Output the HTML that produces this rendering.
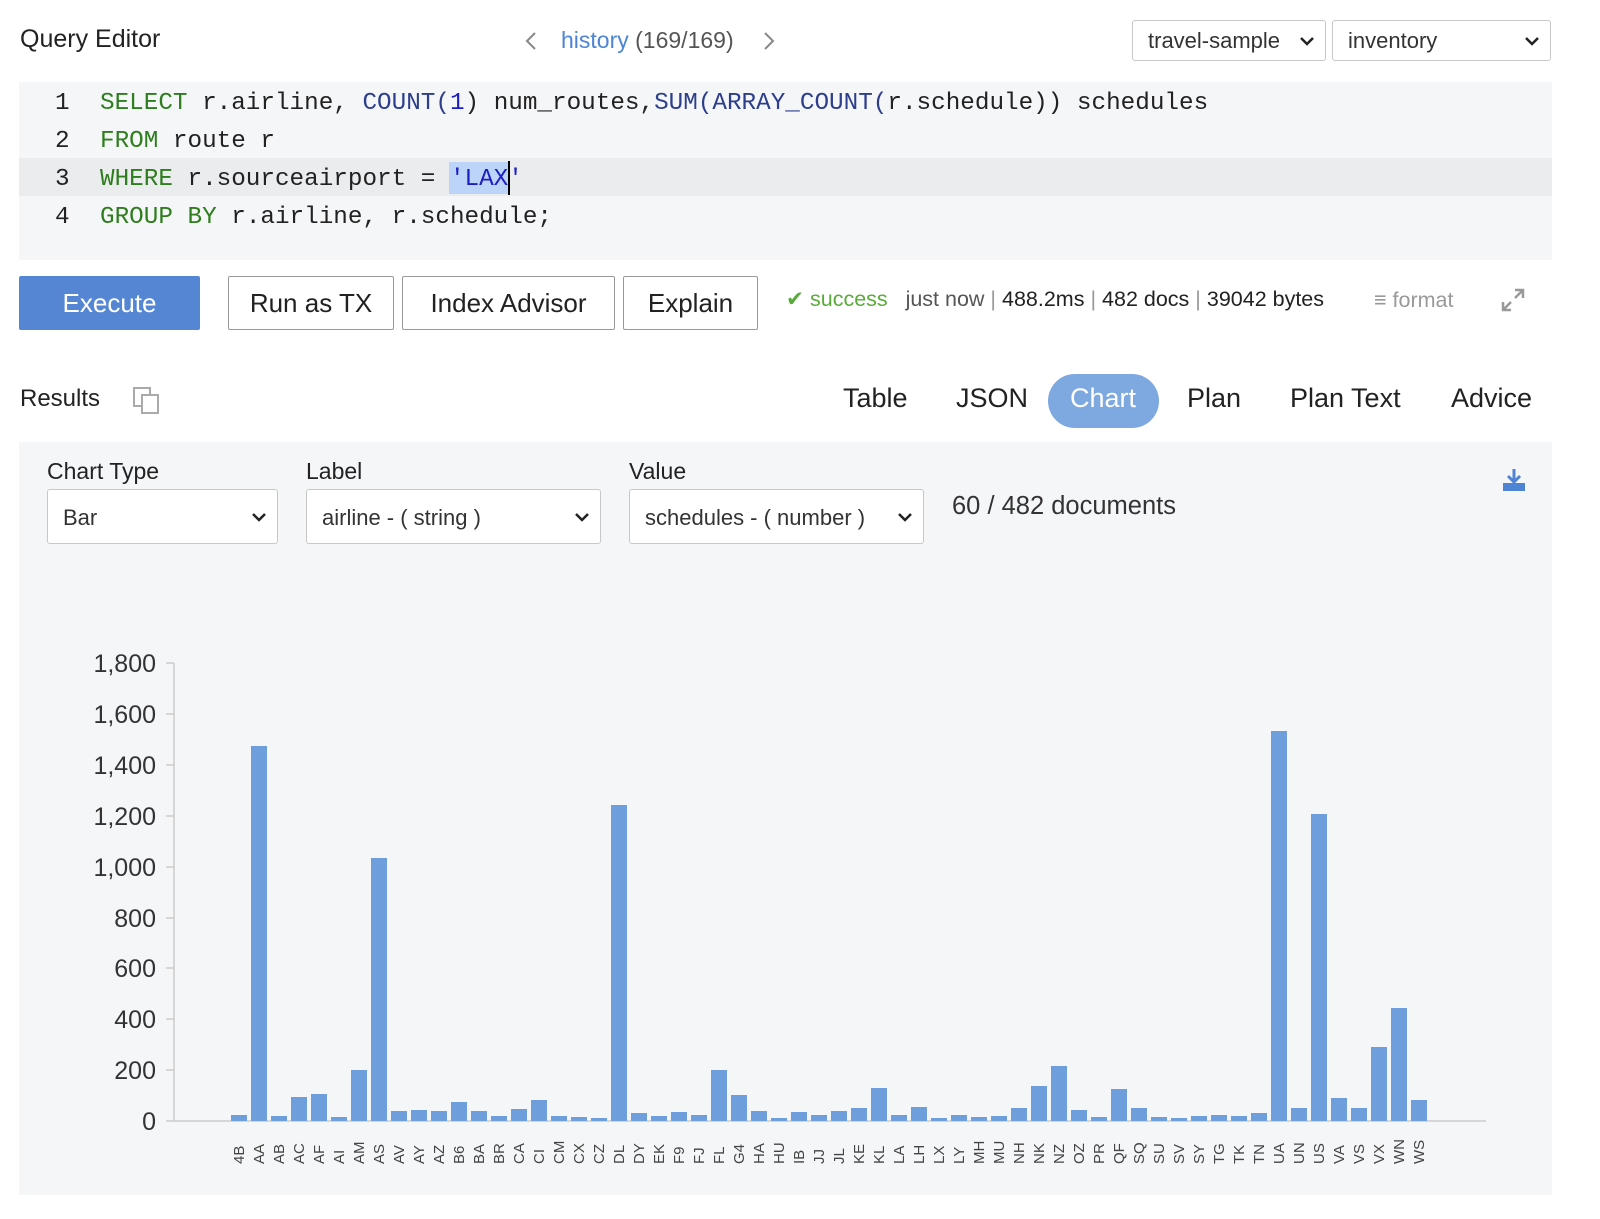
<!DOCTYPE html>
<html><head><meta charset="utf-8"><style>
body{margin:0;width:1600px;height:1219px;background:#fff;font-family:"Liberation Sans",sans-serif;color:#222;position:relative;overflow:hidden}
.a{position:absolute;white-space:nowrap}
.sel{position:absolute;border:1px solid #c8c8c8;border-radius:3px;background:#fff;font-size:22px;color:#333;box-sizing:border-box;padding-left:15px}
.sel svg{position:absolute;right:10px;top:50%;margin-top:-5px}
.btn{position:absolute;top:276px;height:54px;border:1px solid #999;border-radius:2px;box-sizing:border-box;font-size:26px;text-align:center;line-height:52px;color:#222;background:#fff}
.code{font-family:"Liberation Mono",monospace;font-size:24.3px;position:absolute;left:0;white-space:pre}
.k{color:#2e7d1e}.f{color:#2c3e8c}.n{color:#1d1dc4}
.tab{position:absolute;top:383px;font-size:27px;color:#222}
</style></head><body>
<div class="a" style="left:20px;top:25px;font-size:25px;">Query Editor</div>
<svg class="a" style="left:524px;top:31px" width="14" height="20"><path d="M11 2 L3 10 L11 18" stroke="#888" stroke-width="2" fill="none"/></svg>
<div class="a" style="left:561px;top:27px;font-size:23px;color:#555"><span style="color:#4d84d4">history</span> (169/169)</div>
<svg class="a" style="left:762px;top:31px" width="14" height="20"><path d="M3 2 L11 10 L3 18" stroke="#888" stroke-width="2" fill="none"/></svg>
<div class="sel" style="left:1132px;top:20px;width:194px;height:41px;line-height:39px">travel-sample<svg width="16" height="10"><path d="M2 2L8 8L14 2" stroke="#222" stroke-width="2.5" fill="none"/></svg></div>
<div class="sel" style="left:1332px;top:20px;width:219px;height:41px;line-height:39px">inventory<svg width="16" height="10"><path d="M2 2L8 8L14 2" stroke="#222" stroke-width="2.5" fill="none"/></svg></div>

<div class="a" style="left:19px;top:82px;width:1533px;height:178px;background:#f5f6f8">
<div class="a" style="left:0;top:76px;width:1533px;height:38px;background:#ebecee"></div>
<div class="code" style="top:3px;line-height:38px;left:36px">1
2
3
4</div>
<div class="a" style="left:430px;top:80px;width:60px;height:32px;background:#bcd4f7"></div>
<div class="a" style="left:489px;top:79px;width:2px;height:34px;background:#000"></div>
<div class="code" style="top:3px;line-height:38px;left:81px"><span class="k">SELECT</span> r.airline, <span class="f">COUNT(</span><span class="n">1</span>) num_routes,<span class="f">SUM(ARRAY_COUNT(</span>r.schedule)) schedules
<span class="k">FROM</span> route r
<span class="k">WHERE</span> r.sourceairport = <span class="n">'LAX'</span>
<span class="k">GROUP BY</span> r.airline, r.schedule;</div>
</div>

<div class="btn" style="left:19px;width:181px;background:#5586d4;border-color:#5586d4;color:#fff">Execute</div>
<div class="btn" style="left:228px;width:166px">Run as TX</div>
<div class="btn" style="left:402px;width:213px">Index Advisor</div>
<div class="btn" style="left:623px;width:135px">Explain</div>
<div class="a" style="left:786px;top:287px;font-size:21.5px;color:#555"><span style="color:#5aab3a">&#10004; success</span> &nbsp; just now <span style="color:#999">|</span> <span style="color:#222">488.2ms</span> <span style="color:#999">|</span> <span style="color:#222">482 docs</span> <span style="color:#999">|</span> <span style="color:#222">39042 bytes</span></div>
<div class="a" style="left:1374px;top:288px;font-size:21.5px;color:#999">&#8801; format</div>
<svg class="a" style="left:1500px;top:287px" width="26" height="26"><path d="M15 3H23V11M23 3L15 11M3 15V23H11M3 23L11 15" stroke="#999" stroke-width="2.5" fill="none"/></svg>

<div class="a" style="left:20px;top:385px;font-size:24px">Results</div>
<svg class="a" style="left:132px;top:386px" width="30" height="30"><rect x="2" y="2" width="16" height="18" fill="none" stroke="#aaa" stroke-width="2"/><rect x="10" y="9" width="16" height="18" fill="#fff" stroke="#aaa" stroke-width="2"/></svg>
<div class="tab" style="left:843px">Table</div>
<div class="tab" style="left:956px">JSON</div>
<div class="a" style="left:1048px;top:374px;width:111px;height:54px;border-radius:27px;background:#7ea8e0"></div>
<div class="tab" style="left:1070px;color:#fff">Chart</div>
<div class="tab" style="left:1187px">Plan</div>
<div class="tab" style="left:1290px">Plan Text</div>
<div class="tab" style="left:1451px">Advice</div>

<div class="a" style="left:19px;top:442px;width:1533px;height:753px;background:#f5f6f8"></div>
<div class="a" style="left:47px;top:458px;font-size:23px">Chart Type</div>
<div class="a" style="left:306px;top:458px;font-size:23px">Label</div>
<div class="a" style="left:629px;top:458px;font-size:23px">Value</div>
<div class="sel" style="left:47px;top:489px;width:231px;height:55px;line-height:55px">Bar<svg width="16" height="10"><path d="M2 2L8 8L14 2" stroke="#222" stroke-width="2.5" fill="none"/></svg></div>
<div class="sel" style="left:306px;top:489px;width:295px;height:55px;line-height:55px">airline - ( string )<svg width="16" height="10"><path d="M2 2L8 8L14 2" stroke="#222" stroke-width="2.5" fill="none"/></svg></div>
<div class="sel" style="left:629px;top:489px;width:295px;height:55px;line-height:55px">schedules - ( number )<svg width="16" height="10"><path d="M2 2L8 8L14 2" stroke="#222" stroke-width="2.5" fill="none"/></svg></div>
<div class="a" style="left:952px;top:492px;font-size:25.5px;color:#333">60 / 482 documents</div>
<svg class="a" style="left:1502px;top:468px" width="24" height="24"><path d="M12 1V13M6 8L12 14L18 8" stroke="#4d84d4" stroke-width="3" fill="none"/><rect x="1" y="15" width="22" height="8" fill="#4d84d4"/></svg>

<svg class="a" style="left:0;top:0" width="1600" height="1219">
<g font-family="Liberation Sans,sans-serif" font-size="25" fill="#333" text-anchor="end">
<text x="156" y="1130">0</text><text x="156" y="1079">200</text><text x="156" y="1028">400</text><text x="156" y="977">600</text><text x="156" y="927">800</text><text x="156" y="876">1,000</text><text x="156" y="825">1,200</text><text x="156" y="774">1,400</text><text x="156" y="723">1,600</text><text x="156" y="672">1,800</text>
</g>
<g stroke="#ccc" stroke-width="1.5">
<line x1="174" y1="663" x2="174" y2="1121"/><line x1="174" y1="1121" x2="1486" y2="1121"/>
<line x1="166" y1="1121" x2="174" y2="1121"/><line x1="166" y1="1070" x2="174" y2="1070"/><line x1="166" y1="1019" x2="174" y2="1019"/><line x1="166" y1="968" x2="174" y2="968"/><line x1="166" y1="918" x2="174" y2="918"/><line x1="166" y1="867" x2="174" y2="867"/><line x1="166" y1="816" x2="174" y2="816"/><line x1="166" y1="765" x2="174" y2="765"/><line x1="166" y1="714" x2="174" y2="714"/><line x1="166" y1="663" x2="174" y2="663"/>
</g>
<g fill="#6f9edd">
<rect x="231" y="1115" width="16" height="6"/><rect x="251" y="746" width="16" height="375"/><rect x="271" y="1116" width="16" height="5"/><rect x="291" y="1097" width="16" height="24"/><rect x="311" y="1094" width="16" height="27"/><rect x="331" y="1117" width="16" height="4"/><rect x="351" y="1070" width="16" height="51"/><rect x="371" y="858" width="16" height="263"/><rect x="391" y="1111" width="16" height="10"/><rect x="411" y="1110" width="16" height="11"/>
<rect x="431" y="1111" width="16" height="10"/><rect x="451" y="1102" width="16" height="19"/><rect x="471" y="1111" width="16" height="10"/><rect x="491" y="1116" width="16" height="5"/><rect x="511" y="1109" width="16" height="12"/><rect x="531" y="1100" width="16" height="21"/><rect x="551" y="1116" width="16" height="5"/><rect x="571" y="1117" width="16" height="4"/><rect x="591" y="1118" width="16" height="3"/><rect x="611" y="805" width="16" height="316"/>
<rect x="631" y="1113" width="16" height="8"/><rect x="651" y="1116" width="16" height="5"/><rect x="671" y="1112" width="16" height="9"/><rect x="691" y="1115" width="16" height="6"/><rect x="711" y="1070" width="16" height="51"/><rect x="731" y="1095" width="16" height="26"/><rect x="751" y="1111" width="16" height="10"/><rect x="771" y="1118" width="16" height="3"/><rect x="791" y="1112" width="16" height="9"/><rect x="811" y="1115" width="16" height="6"/>
<rect x="831" y="1111" width="16" height="10"/><rect x="851" y="1108" width="16" height="13"/><rect x="871" y="1088" width="16" height="33"/><rect x="891" y="1115" width="16" height="6"/><rect x="911" y="1107" width="16" height="14"/><rect x="931" y="1118" width="16" height="3"/><rect x="951" y="1115" width="16" height="6"/><rect x="971" y="1117" width="16" height="4"/><rect x="991" y="1116" width="16" height="5"/><rect x="1011" y="1108" width="16" height="13"/>
<rect x="1031" y="1086" width="16" height="35"/><rect x="1051" y="1066" width="16" height="55"/><rect x="1071" y="1110" width="16" height="11"/><rect x="1091" y="1117" width="16" height="4"/><rect x="1111" y="1089" width="16" height="32"/><rect x="1131" y="1108" width="16" height="13"/><rect x="1151" y="1117" width="16" height="4"/><rect x="1171" y="1118" width="16" height="3"/><rect x="1191" y="1116" width="16" height="5"/><rect x="1211" y="1115" width="16" height="6"/>
<rect x="1231" y="1116" width="16" height="5"/><rect x="1251" y="1113" width="16" height="8"/><rect x="1271" y="731" width="16" height="390"/><rect x="1291" y="1108" width="16" height="13"/><rect x="1311" y="814" width="16" height="307"/><rect x="1331" y="1098" width="16" height="23"/><rect x="1351" y="1108" width="16" height="13"/><rect x="1371" y="1047" width="16" height="74"/><rect x="1391" y="1008" width="16" height="113"/><rect x="1411" y="1100" width="16" height="21"/>
</g>
<g font-family="Liberation Sans,sans-serif" font-size="15" fill="#444" text-anchor="start">
<text transform="translate(244,1164) rotate(-90)">4B</text><text transform="translate(264,1164) rotate(-90)">AA</text><text transform="translate(284,1164) rotate(-90)">AB</text><text transform="translate(304,1164) rotate(-90)">AC</text><text transform="translate(324,1164) rotate(-90)">AF</text><text transform="translate(344,1164) rotate(-90)">AI</text><text transform="translate(364,1164) rotate(-90)">AM</text><text transform="translate(384,1164) rotate(-90)">AS</text><text transform="translate(404,1164) rotate(-90)">AV</text><text transform="translate(424,1164) rotate(-90)">AY</text>
<text transform="translate(444,1164) rotate(-90)">AZ</text><text transform="translate(464,1164) rotate(-90)">B6</text><text transform="translate(484,1164) rotate(-90)">BA</text><text transform="translate(504,1164) rotate(-90)">BR</text><text transform="translate(524,1164) rotate(-90)">CA</text><text transform="translate(544,1164) rotate(-90)">CI</text><text transform="translate(564,1164) rotate(-90)">CM</text><text transform="translate(584,1164) rotate(-90)">CX</text><text transform="translate(604,1164) rotate(-90)">CZ</text><text transform="translate(624,1164) rotate(-90)">DL</text>
<text transform="translate(644,1164) rotate(-90)">DY</text><text transform="translate(664,1164) rotate(-90)">EK</text><text transform="translate(684,1164) rotate(-90)">F9</text><text transform="translate(704,1164) rotate(-90)">FJ</text><text transform="translate(724,1164) rotate(-90)">FL</text><text transform="translate(744,1164) rotate(-90)">G4</text><text transform="translate(764,1164) rotate(-90)">HA</text><text transform="translate(784,1164) rotate(-90)">HU</text><text transform="translate(804,1164) rotate(-90)">IB</text><text transform="translate(824,1164) rotate(-90)">JJ</text>
<text transform="translate(844,1164) rotate(-90)">JL</text><text transform="translate(864,1164) rotate(-90)">KE</text><text transform="translate(884,1164) rotate(-90)">KL</text><text transform="translate(904,1164) rotate(-90)">LA</text><text transform="translate(924,1164) rotate(-90)">LH</text><text transform="translate(944,1164) rotate(-90)">LX</text><text transform="translate(964,1164) rotate(-90)">LY</text><text transform="translate(984,1164) rotate(-90)">MH</text><text transform="translate(1004,1164) rotate(-90)">MU</text><text transform="translate(1024,1164) rotate(-90)">NH</text>
<text transform="translate(1044,1164) rotate(-90)">NK</text><text transform="translate(1064,1164) rotate(-90)">NZ</text><text transform="translate(1084,1164) rotate(-90)">OZ</text><text transform="translate(1104,1164) rotate(-90)">PR</text><text transform="translate(1124,1164) rotate(-90)">QF</text><text transform="translate(1144,1164) rotate(-90)">SQ</text><text transform="translate(1164,1164) rotate(-90)">SU</text><text transform="translate(1184,1164) rotate(-90)">SV</text><text transform="translate(1204,1164) rotate(-90)">SY</text><text transform="translate(1224,1164) rotate(-90)">TG</text>
<text transform="translate(1244,1164) rotate(-90)">TK</text><text transform="translate(1264,1164) rotate(-90)">TN</text><text transform="translate(1284,1164) rotate(-90)">UA</text><text transform="translate(1304,1164) rotate(-90)">UN</text><text transform="translate(1324,1164) rotate(-90)">US</text><text transform="translate(1344,1164) rotate(-90)">VA</text><text transform="translate(1364,1164) rotate(-90)">VS</text><text transform="translate(1384,1164) rotate(-90)">VX</text><text transform="translate(1404,1164) rotate(-90)">WN</text><text transform="translate(1424,1164) rotate(-90)">WS</text>
</g>
</svg>
</body></html>
